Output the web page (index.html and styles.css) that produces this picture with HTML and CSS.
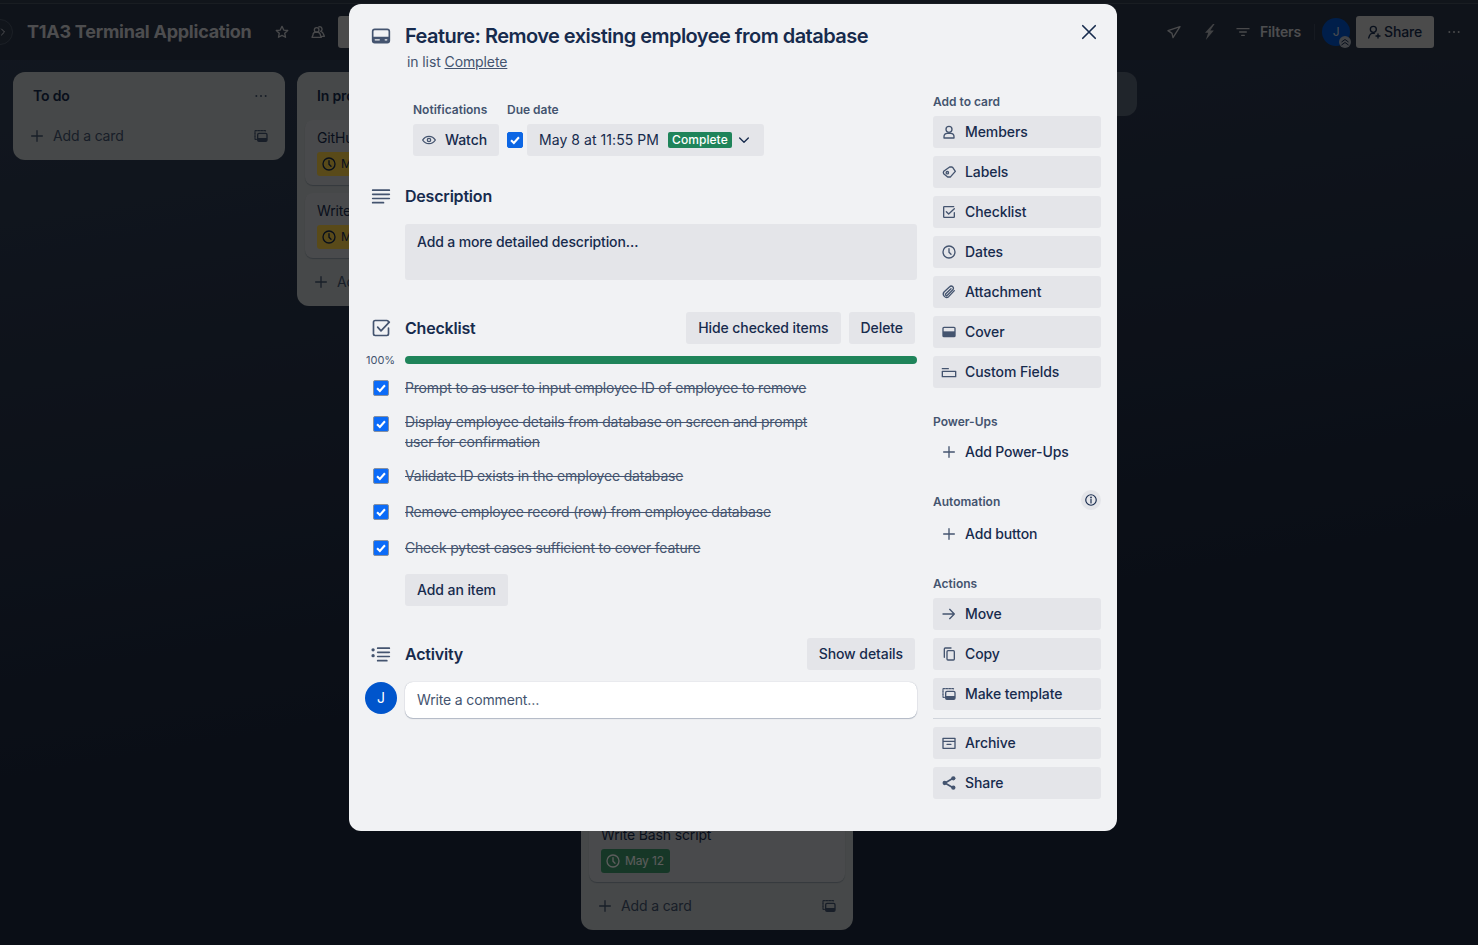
FILE: index.html
```html
<!DOCTYPE html>
<html lang="en">
<head>
    <meta charset="UTF-8">
    <meta name="viewport" content="width=device-width, initial-scale=1.0">
    <title>Feature: Remove existing employee from database</title>
    <link rel="stylesheet" href="styles.css">
</head>
<body>
    <svg class="sprite" aria-hidden="true">
        <symbol id="i-plus" viewBox="0 0 24 24"><path d="M12 4v16M4 12h16"/></symbol>
        <symbol id="i-clock" viewBox="0 0 24 24"><circle cx="12" cy="12" r="9"/><path d="M12 7v5.5l3 3"/></symbol>
        <symbol id="i-template" viewBox="0 0 24 24"><path d="M5 17H4a1 1 0 0 1-1-1V5a1 1 0 0 1 1-1h14a1 1 0 0 1 1 1v1" stroke-dasharray="2.5 2"/><rect x="7" y="8" width="14" height="12" rx="2"/><path class="solid" d="M7 15h14v3a2 2 0 0 1-2 2H9a2 2 0 0 1-2-2z"/></symbol>
        <symbol id="i-check" viewBox="0 0 16 16"><path d="M3.5 8.2l3.200 3.200 5.800-6.600"/></symbol>
    </svg>

    <div class="board">
        <div class="nav-strip"></div>
        <div class="side-toggle">
            <svg class="icon icon-xs" viewBox="0 0 24 24"><path d="M9 6l6 6-6 6"/></svg>
        </div>
        <header class="board-bar">
            <h1 class="board-title">T1A3 Terminal Application</h1>
            <svg class="icon bar-icon star" viewBox="0 0 24 24"><path d="M12 3.5l2.6 5.6 6 .7-4.5 4.1 1.2 6L12 17l-5.3 2.9 1.2-6-4.5-4.1 6-.7z"/></svg>
            <svg class="icon bar-icon people" viewBox="0 0 24 24"><circle cx="10" cy="9" r="3.5"/><path d="M3 20l1.500-3.500a5.500 4.500 0 0 1 11 0L17 20zM13 4.500a3.500 3.500 0 1 1 3 6.500c2.500.5 3.500 2 4 3.500l1.500 4H18"/></svg>
            <button class="bar-button view-button"></button>
            <div class="bar-right">
                <svg class="icon bar-icon rocket" viewBox="0 0 24 24"><path d="M21 4L3 10l6 4 1.500 6.500z"/></svg>
                <svg class="bolt" viewBox="4 2 16 20"><path d="M17 2L7 13h4l-3 9 10-12h-4.500L19 2z"/></svg>
                <svg class="icon bar-icon filter" viewBox="0 0 24 24"><path d="M3 7h18M7 12h10M10 17h4"/></svg>
                <span class="filters">Filters</span>
                <span class="bar-divider"></span>
                <div class="bar-avatar">J
                    <svg class="avatar-badge" viewBox="0 0 12 12"><circle cx="6" cy="6" r="6"/><path d="M2.500 6L6 3.500 9.500 6M2.500 9L6 6.500 9.500 9"/></svg>
                </div>
                <button class="bar-button share-button">
                    <svg class="icon icon-sm" viewBox="0 0 24 24"><circle cx="11" cy="8" r="4.500"/><path d="M4 21l1.500-4a4 4 0 0 1 4-3h3M18 15v6M15 18h6"/></svg>
                    Share
                </button>
                <svg class="icon bar-icon dots-wide" viewBox="0 0 24 24"><path class="dots" d="M5 12h.01M12 12h.01M19 12h.01"/></svg>
            </div>
        </header>

        <main class="lists">
            <section class="list">
                <div class="list-head">
                    <h2>To do</h2>
                    <svg class="icon icon-sm" viewBox="0 0 24 24"><path class="dots" d="M5 12h.01M12 12h.01M19 12h.01"/></svg>
                </div>
                <div class="add-card">
                    <svg class="icon icon-sm"><use href="#i-plus"/></svg>
                    <span>Add a card</span>
                    <svg class="icon icon-sm copy"><use href="#i-template"/></svg>
                </div>
            </section>

            <section class="list">
                <div class="list-head">
                    <h2>In progress</h2>
                    <svg class="icon icon-sm" viewBox="0 0 24 24"><path class="dots" d="M5 12h.01M12 12h.01M19 12h.01"/></svg>
                </div>
                <div class="card">
                    <div class="card-title">GitHub repository</div>
                    <span class="due due-soon"><svg class="icon icon-sm"><use href="#i-clock"/></svg>May 12</span>
                </div>
                <div class="card">
                    <div class="card-title">Write README</div>
                    <span class="due due-soon"><svg class="icon icon-sm"><use href="#i-clock"/></svg>May 12</span>
                </div>
                <div class="add-card">
                    <svg class="icon icon-sm"><use href="#i-plus"/></svg>
                    <span>Add a card</span>
                    <svg class="icon icon-sm copy"><use href="#i-template"/></svg>
                </div>
            </section>

            <section class="list">
                <div class="list-head">
                    <h2>Complete</h2>
                </div>
                <div class="hidden-cards"></div>
                <div class="card">
                    <div class="card-title">Write Bash script</div>
                    <span class="due due-done"><svg class="icon icon-sm"><use href="#i-clock"/></svg>May 12</span>
                </div>
                <div class="add-card">
                    <svg class="icon icon-sm"><use href="#i-plus"/></svg>
                    <span>Add a card</span>
                    <svg class="icon icon-sm copy"><use href="#i-template"/></svg>
                </div>
            </section>

            <div class="add-list"></div>
        </main>
    </div>

    <div class="overlay">
        <div class="modal">
            <button class="close" aria-label="Close">
                <svg class="icon icon-lg" viewBox="0 0 24 24"><path d="M4.500 4.500l15 15M19.500 4.500l-15 15"/></svg>
            </button>

            <div class="modal-head">
                <div class="gutter">
                    <svg class="icon icon-lg title-icon" viewBox="0 0 24 24"><rect x="2" y="4" width="20" height="16" rx="2.500"/><path class="solid" d="M2 13h20v4.500a2.500 2.500 0 0 1-2.500 2.500h-15A2.500 2.500 0 0 1 2 17.500z"/><path class="cut" d="M5 16.500h5M17 16.500h2"/></svg>
                </div>
                <div>
                    <h2 class="card-name">Feature: Remove existing employee from database</h2>
                    <p class="in-list">in list <a href="#">Complete</a></p>
                </div>
            </div>

            <div class="modal-body">
                <div class="main-col">
                    <div class="meta">
                        <div>
                            <h3 class="label">Notifications</h3>
                            <button class="btn watch">
                                <svg class="icon icon-md" viewBox="0 0 24 24"><path d="M2.500 12S6 6.500 12 6.500 21.500 12 21.500 12 18 17.500 12 17.500 2.500 12 2.500 12z"/><circle cx="12" cy="12" r="2.500"/></svg>
                                Watch
                            </button>
                        </div>
                        <div>
                            <h3 class="label">Due date</h3>
                            <div class="due-row">
                                <span class="check check-plain"><svg><use href="#i-check"/></svg></span>
                                <button class="btn date">
                                    May 8 at 11:55 PM
                                    <span class="badge">Complete</span>
                                    <svg class="icon icon-md" viewBox="0 0 24 24"><path d="M5.500 9l6.500 6.500L18.500 9"/></svg>
                                </button>
                            </div>
                        </div>
                    </div>

                    <div class="section-head description-head">
                        <div class="gutter">
                            <svg class="icon icon-lg" viewBox="0 0 24 24"><path d="M2 5h20M2 10h20M2 15h20M2 20h13"/></svg>
                        </div>
                        <h3 class="section-title">Description</h3>
                    </div>
                    <div class="description-box">Add a more detailed description…</div>

                    <div class="section-head checklist-head">
                        <div class="gutter">
                            <svg class="icon icon-lg" viewBox="0 0 24 24"><path d="M21 12v7a2 2 0 0 1-2 2H5a2 2 0 0 1-2-2V5a2 2 0 0 1 2-2h14a2 2 0 0 1 2 2"/><path d="M8 11l4 4.500L22 5"/></svg>
                        </div>
                        <h3 class="section-title">Checklist</h3>
                        <div class="head-buttons">
                            <button class="btn">Hide checked items</button>
                            <button class="btn">Delete</button>
                        </div>
                    </div>

                    <div class="progress">
                        <span class="progress-num">100%</span>
                        <div class="progress-track"></div>
                    </div>

                    <ul class="items">
                        <li class="item item-tight">
                            <span class="check"><svg><use href="#i-check"/></svg></span>
                            <span class="item-text">Prompt to as user to input employee ID of employee to remove</span>
                        </li>
                        <li class="item item-tight item-wrapped">
                            <span class="check"><svg><use href="#i-check"/></svg></span>
                            <span class="item-text">Display employee details from database on screen and prompt user for confirmation</span>
                        </li>
                        <li class="item">
                            <span class="check"><svg><use href="#i-check"/></svg></span>
                            <span class="item-text">Validate ID exists in the employee database</span>
                        </li>
                        <li class="item">
                            <span class="check"><svg><use href="#i-check"/></svg></span>
                            <span class="item-text">Remove employee record (row) from employee database</span>
                        </li>
                        <li class="item">
                            <span class="check"><svg><use href="#i-check"/></svg></span>
                            <span class="item-text">Check pytest cases sufficient to cover feature</span>
                        </li>
                    </ul>
                    <button class="btn add-item">Add an item</button>

                    <div class="section-head activity-head">
                        <div class="gutter">
                            <svg class="icon icon-lg" viewBox="0 0 24 24"><path class="dots thick" d="M2.500 7h.01M2.500 14h.01"/><path d="M8 5h14M8 10h14M8 15h14M8 20h11"/></svg>
                        </div>
                        <h3 class="section-title">Activity</h3>
                        <div class="head-buttons">
                            <button class="btn">Show details</button>
                        </div>
                    </div>

                    <div class="comment-row">
                        <div class="avatar">J</div>
                        <div class="comment">Write a comment…</div>
                    </div>
                </div>

                <aside class="side-col">
                    <h3 class="label">Add to card</h3>
                    <div class="side-group">
                        <button class="btn side-btn"><svg class="icon icon-md" viewBox="0 0 24 24"><circle cx="12" cy="8" r="4.500"/><path d="M4.500 21v-2a5 5 0 0 1 5-5h5a5 5 0 0 1 5 5v2z"/></svg>Members</button>
                        <button class="btn side-btn"><svg class="icon icon-md" viewBox="0 0 24 24"><path d="M13 4.500h3a2 2 0 0 1 1.500.7l4 5.800-7 8a2 2 0 0 1-1.500.5h-3L4 14.500a3.500 3.500 0 0 1 0-3.500z"/><circle cx="9.500" cy="13" r="1.800"/></svg>Labels</button>
                        <button class="btn side-btn"><svg class="icon icon-md" viewBox="0 0 24 24"><path d="M20 13v6a1 1 0 0 1-1 1H5a1 1 0 0 1-1-1V5a1 1 0 0 1 1-1h14"/><path d="M8 11.500l3.500 3.500L20 7"/></svg>Checklist</button>
                        <button class="btn side-btn"><svg class="icon icon-md"><use href="#i-clock"/></svg>Dates</button>
                        <button class="btn side-btn"><svg class="icon icon-md" viewBox="0 0 24 24"><path d="M20 10l-8.500 9a5 5 0 0 1-7-7L13 4a3.300 3.300 0 0 1 4.700 4.700L9.500 17a1.600 1.600 0 0 1-2.300-2.300L15 7"/></svg>Attachment</button>
                        <button class="btn side-btn"><svg class="icon icon-md" viewBox="0 0 24 24"><rect x="3" y="5" width="18" height="14" rx="1.500"/><path class="solid" d="M3 11h18v8H3z"/></svg>Cover</button>
                        <button class="btn side-btn"><svg class="icon icon-md" viewBox="0 0 24 24"><path d="M2 7h9M2 11h20v8H2z"/></svg>Custom Fields</button>
                    </div>

                    <h3 class="label">Power-Ups</h3>
                    <div class="side-group">
                        <button class="side-link"><svg class="icon icon-md"><use href="#i-plus"/></svg>Add Power-Ups</button>
                    </div>

                    <div class="label-row">
                        <h3 class="label">Automation</h3>
                        <span class="info">
                            <svg class="icon icon-md" viewBox="0 0 24 24"><circle cx="12" cy="12" r="9"/><path d="M12 11v6"/><path class="dots" d="M12 7.500h.01"/></svg>
                        </span>
                    </div>
                    <div class="side-group">
                        <button class="side-link"><svg class="icon icon-md"><use href="#i-plus"/></svg>Add button</button>
                    </div>

                    <h3 class="label">Actions</h3>
                    <div class="side-group side-last">
                        <button class="btn side-btn"><svg class="icon icon-md" viewBox="0 0 24 24"><path d="M3 12h17M13 5l7 7-7 7"/></svg>Move</button>
                        <button class="btn side-btn"><svg class="icon icon-md" viewBox="0 0 24 24"><rect x="9" y="7" width="11" height="14" rx="1.500"/><path d="M5 17V4.500A1.500 1.500 0 0 1 6.500 3H15"/></svg>Copy</button>
                        <button class="btn side-btn"><svg class="icon icon-md"><use href="#i-template"/></svg>Make template</button>
                        <hr class="side-rule">
                        <button class="btn side-btn"><svg class="icon icon-md" viewBox="0 0 24 24"><path d="M3 5h18v15H3zM3 9.500h18M9 14h6"/></svg>Archive</button>
                        <button class="btn side-btn"><svg class="icon icon-md share-icon" viewBox="0 0 24 24"><path d="M18 5L6 12l12 7"/><circle class="solid" cx="18.500" cy="5" r="3.200"/><circle class="solid" cx="5.500" cy="12" r="3.200"/><circle class="solid" cx="18.500" cy="19" r="3.200"/></svg>Share</button>
                    </div>
                </aside>
            </div>
        </div>
    </div>
</body>
</html>
```

FILE: styles.css
```css
* {
    box-sizing: border-box;
}

html,
body {
    height: 100%;
}

body {
    margin: 0;
    overflow: hidden;
    font-family: Inter, "Noto Sans", sans-serif;
    font-size: 14px;
    line-height: 20px;
    letter-spacing: -0.15px;
    color: #172b4d;
    background: #1c273d;
}

button {
    font: inherit;
    letter-spacing: inherit;
    color: inherit;
    border: none;
    background: none;
    padding: 0;
}

h1,
h2,
h3,
p,
ul {
    margin: 0;
    padding: 0;
}

.sprite {
    display: none;
}

.icon {
    flex: none;
    fill: none;
    stroke: currentColor;
    stroke-width: 2;
    stroke-linecap: round;
    stroke-linejoin: round;
}

.icon .solid,
.solid {
    fill: currentColor;
    stroke: none;
}

.icon .cut {
    stroke: #f1f2f4;
    stroke-width: 1.5;
}

.dots {
    stroke-width: 3;
}

.thick {
    stroke-width: 4;
}

.icon-xs {
    width: 12px;
    height: 12px;
}

.icon-sm,
.icon-md {
    width: 16px;
    height: 16px;
    color: #44546f;
}

.icon-lg {
    width: 20px;
    height: 20px;
    color: #44546f;
}

.share-icon {
    stroke-width: 2.5;
}

/* board behind the card */
.board {
    height: 100%;
    display: flex;
    flex-direction: column;
    background: linear-gradient(170deg, #334158, #1c273d 70%);
}

.nav-strip {
    height: 4px;
    border-bottom: 1px solid #46505f;
    background: #2f3a4d;
}

.side-toggle {
    position: absolute;
    left: -13px;
    top: 19px;
    width: 26px;
    height: 26px;
    display: flex;
    align-items: center;
    justify-content: flex-end;
    padding-right: 3px;
    border-radius: 50%;
    border: 1px solid #4d5868;
    background: #2f3a4d;
    color: #dfe1e6;
}

.board-bar {
    height: 56px;
    display: flex;
    align-items: center;
    padding-left: 27px;
    background: #2a3548;
    color: #d4d6da;
}

.board-title {
    font-size: 18px;
    line-height: 32px;
    font-weight: 700;
    letter-spacing: -0.25px;
    width: 225px;
    white-space: nowrap;
}

.bar-icon {
    width: 16px;
    height: 16px;
    color: #c9cbd0;
}

.star {
    margin-left: 22px;
}

.people {
    margin-left: 20px;
}

.bar-button {
    height: 32px;
    border-radius: 3px;
    background: #cfcfcf;
}

.view-button {
    width: 100px;
    margin-left: 12px;
}

.bar-right {
    margin-left: auto;
    display: flex;
    align-items: center;
    padding-right: 16px;
}

.bolt {
    width: 14px;
    height: 16px;
    margin-left: 20px;
    fill: #b5b7bc;
}

.filter {
    margin-left: 19px;
}

.filters {
    margin-left: 9px;
    font-weight: 600;
}

.bar-divider {
    width: 1px;
    height: 16px;
    margin: 0 7px 0 13px;
    background: #3f4a5c;
}

.bar-avatar {
    position: relative;
    width: 28px;
    height: 28px;
    border-radius: 50%;
    background: #0055cc;
    color: #d4d6da;
    font-size: 12px;
    line-height: 28px;
    text-align: center;
}

.avatar-badge {
    position: absolute;
    right: -1px;
    bottom: -2px;
    width: 12px;
    height: 12px;
}

.avatar-badge circle {
    fill: #b3b9c4;
}

.avatar-badge path {
    fill: none;
    stroke: #172b4d;
}

.share-button {
    display: flex;
    align-items: center;
    gap: 2px;
    width: 78px;
    margin-left: 6px;
    padding-left: 10px;
    color: #172b4d;
    font-weight: 500;
}

.share-button .icon {
    color: #172b4d;
}

.dots-wide {
    margin-left: 12px;
}

.lists {
    display: flex;
    align-items: flex-start;
    gap: 12px;
    padding: 12px 13px;
}

.list {
    flex: none;
    width: 272px;
    padding: 0 8px 8px;
    border-radius: 12px;
    background: #c2c8ca;
}

.list-head {
    height: 48px;
    display: flex;
    align-items: center;
    justify-content: space-between;
    padding: 0 8px 0 12px;
}

.list-head h2 {
    font-size: 14px;
    font-weight: 600;
}

.card {
    margin-bottom: 8px;
    padding: 8px 12px;
    border-radius: 8px;
    background: #cbced2;
    box-shadow: 0 1px 1px rgba(9, 30, 66, 0.25);
}

.card-title {
    height: 20px;
    margin-bottom: 4px;
}

.due {
    display: inline-flex;
    align-items: center;
    gap: 4px;
    height: 24px;
    padding: 0 6px 0 4px;
    border-radius: 3px;
    font-size: 12px;
}

.due .icon {
    color: inherit;
}

.due-soon {
    background: #f5cd47;
}

.due-done {
    background: #3f9a6e;
    color: #fff;
}

.add-card {
    height: 32px;
    display: flex;
    align-items: center;
    gap: 8px;
    padding: 0 8px;
    color: #44546f;
}

.card + .add-card {
    margin-top: 2px;
}

.add-card .copy {
    margin-left: auto;
}

.hidden-cards {
    height: 697px;
}

.add-list {
    flex: none;
    width: 272px;
    height: 44px;
    border-radius: 12px;
    background: #5a6678;
}

/* card window */
.overlay {
    position: fixed;
    inset: 0;
    padding: 4px 0 0 349px;
    background: rgba(0, 0, 0, 0.64);
}

.modal {
    position: relative;
    width: 768px;
    height: 827px;
    padding: 20px 16px 0;
    border-radius: 12px;
    background: #f1f2f4;
}

.close {
    position: absolute;
    top: 16px;
    right: 16px;
    width: 24px;
    height: 24px;
    display: flex;
    align-items: center;
    justify-content: center;
}

.close .icon {
    color: #172b4d;
}

.modal-head {
    display: flex;
}

.gutter {
    flex: none;
    width: 40px;
    display: flex;
    align-items: center;
    padding-left: 6px;
}

.title-icon {
    margin-top: -1px;
}

.modal-head .gutter {
    height: 24px;
}

.card-name {
    font-size: 20px;
    line-height: 24px;
    font-weight: 600;
    letter-spacing: -0.53px;
}

.in-list {
    margin: 4px 0 0 2px;
    color: #44546f;
    letter-spacing: -0.1px;
}

.in-list a {
    color: #44546f;
}

.modal-body {
    display: flex;
    gap: 16px;
    margin-top: 20px;
}

.main-col {
    width: 552px;
}

.side-col {
    width: 168px;
}

.label {
    font-size: 12px;
    line-height: 16px;
    font-weight: 600;
    letter-spacing: 0;
    color: #44546f;
}

.meta {
    display: flex;
    gap: 8px;
    margin: 10px 0 0 48px;
}

.meta .label {
    margin-bottom: 6px;
}

.btn {
    height: 32px;
    display: inline-flex;
    align-items: center;
    padding: 0 12px;
    border-radius: 3px;
    background: #e4e5e9;
    font-weight: 500;
    letter-spacing: -0.08px;
    white-space: nowrap;
}

.watch {
    gap: 8px;
    padding-left: 8px;
}

.due-row {
    display: flex;
    align-items: center;
    gap: 4px;
}

.date {
    font-weight: 400;
    letter-spacing: 0.06px;
}

.badge {
    height: 16px;
    margin: 0 4px 0 9px;
    padding: 0 4px;
    border-radius: 2px;
    background: #1f845a;
    color: #fff;
    font-size: 12px;
    line-height: 16px;
    font-weight: 500;
}

.date .icon {
    color: #172b4d;
}

.check {
    flex: none;
    width: 16px;
    height: 16px;
    display: block;
    border: 1px solid #8590a2;
    border-radius: 2px;
    background: #0b6bf8;
}

.check svg {
    display: block;
    width: 100%;
    height: 100%;
    fill: none;
    stroke: #fff;
    stroke-width: 2.4;
}

.check-plain {
    border-color: #0c66e4;
    background: #0c66e4;
}

.section-head {
    display: flex;
    align-items: center;
}

.section-title {
    font-size: 16px;
    line-height: 24px;
    font-weight: 600;
    letter-spacing: -0.2px;
}

.head-buttons {
    margin-left: auto;
    padding-right: 2px;
    display: flex;
    gap: 8px;
}

.description-head {
    height: 24px;
    margin-top: 28px;
}

.description-box {
    height: 56px;
    margin: 16px 0 0 40px;
    padding: 8px 12px;
    border-radius: 3px;
    background: #e4e5e9;
    font-weight: 500;
}

.checklist-head {
    height: 32px;
    margin-top: 32px;
}

.progress {
    display: flex;
    align-items: center;
    height: 8px;
    margin-top: 12px;
}

.progress-num {
    flex: none;
    width: 40px;
    padding-left: 1px;
    font-size: 11px;
    letter-spacing: 0;
    color: #44546f;
}

.progress-track {
    flex: 1;
    height: 8px;
    border-radius: 4px;
    background: #1f845a;
}

.items {
    list-style: none;
    margin-top: 14px;
}

.item {
    display: flex;
    margin-bottom: 16px;
}

.item-tight {
    margin-bottom: 14px;
}

.item .check {
    margin: 2px 16px 0 8px;
}

.item-wrapped .check {
    margin-top: 4px;
}

.item-text {
    max-width: 412px;
    letter-spacing: -0.19px;
    color: #44546f;
    text-decoration: line-through;
}

.add-item {
    margin-left: 40px;
}

.activity-head {
    height: 32px;
    margin-top: 32px;
}

.comment-row {
    display: flex;
    align-items: flex-start;
    gap: 8px;
    margin-top: 12px;
}

.avatar {
    flex: none;
    width: 32px;
    height: 32px;
    border-radius: 50%;
    background: #0055cc;
    color: #fff;
    font-size: 14px;
    line-height: 32px;
    text-align: center;
}

.comment {
    flex: 1;
    height: 36px;
    padding: 8px 12px;
    border-radius: 8px;
    background: #fff;
    color: #44546f;
    box-shadow: 0 1px 1px rgba(9, 30, 66, 0.25), 0 0 1px rgba(9, 30, 66, 0.31);
}

.side-col .label {
    line-height: 20px;
    margin-bottom: 4px;
}

.side-group {
    display: flex;
    flex-direction: column;
    gap: 8px;
    margin-bottom: 24px;
}

.side-btn {
    gap: 8px;
    padding: 0 8px;
}

.side-link {
    height: 32px;
    display: flex;
    align-items: center;
    gap: 8px;
    padding: 0 8px;
    font-weight: 500;
}

.side-rule {
    width: 100%;
    height: 1px;
    margin: 0;
    border: none;
    background: #d0d4db;
}

.label-row {
    display: flex;
    justify-content: space-between;
    height: 18px;
    margin-bottom: 8px;
}

.side-col .label-row .label {
    margin: 0;
    line-height: 18px;
    padding-top: 1px;
}

.info {
    width: 20px;
    height: 20px;
    margin-top: -2px;
    display: flex;
    align-items: center;
    justify-content: center;
    border-radius: 50%;
    background: #e4e5e9;
}

.info .icon {
    width: 14px;
    height: 14px;
    color: #172b4d;
}
```
